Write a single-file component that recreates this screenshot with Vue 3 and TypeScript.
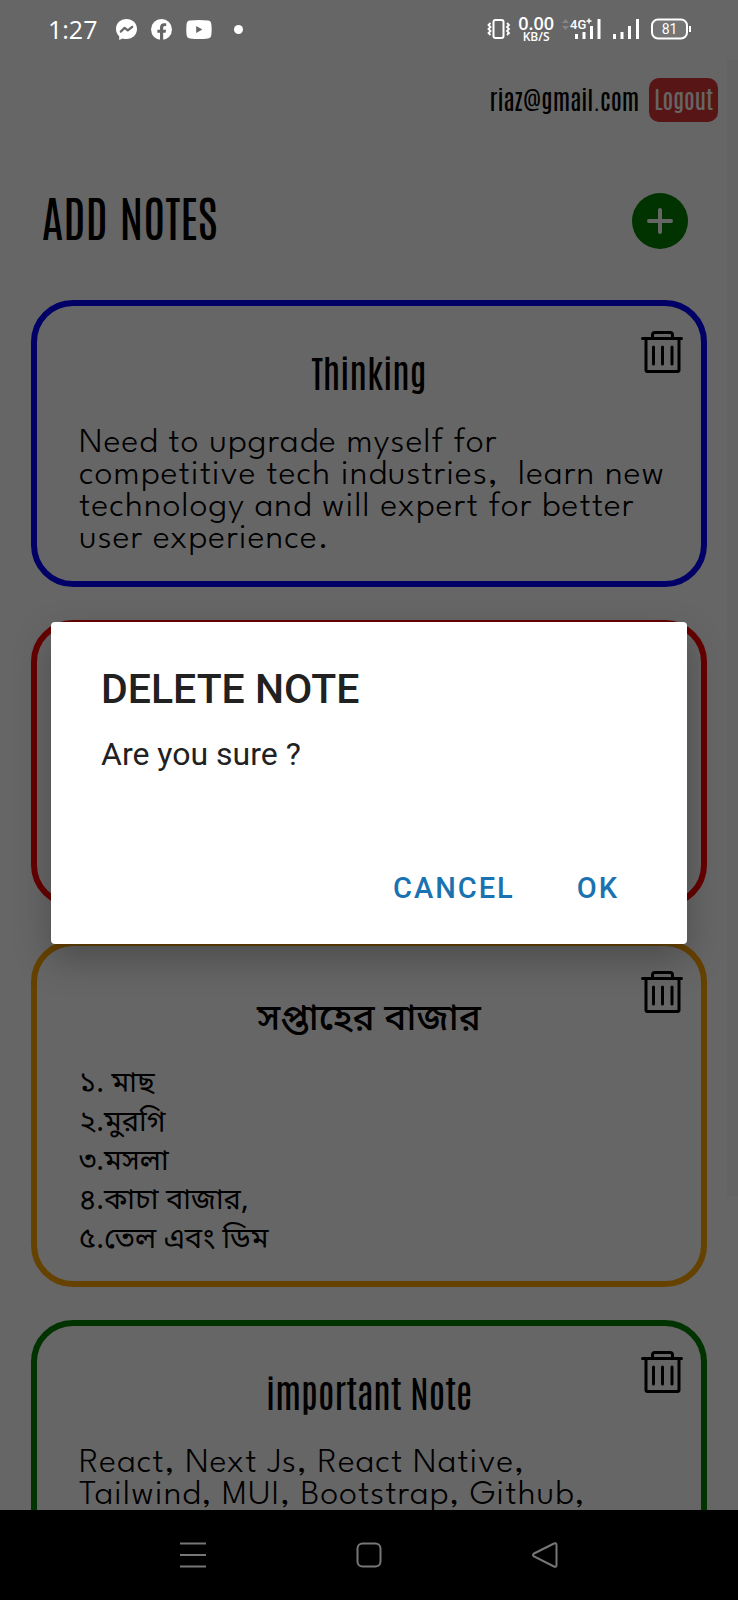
<script setup lang="ts">
import { ref } from 'vue'

interface Note {
  title: string
  body: string
  tone: 'blue' | 'red' | 'orange' | 'green'
  lang: 'en' | 'bn'
}

const notes: Note[] = [
  {
    title: 'Thinking',
    body: 'Need to upgrade myself for\ncompetitive tech industries,  learn new\ntechnology and will expert for better\nuser experience.',
    tone: 'blue',
    lang: 'en',
  },
  { title: '', body: '', tone: 'red', lang: 'en' },
  {
    title: 'সপ্তাহের বাজার',
    body: '১. মাছ\n২.মুরগি\n৩.মসলা\n৪.কাচা বাজার,\n৫.তেল এবং ডিম',
    tone: 'orange',
    lang: 'bn',
  },
  {
    title: 'important Note',
    body: 'React, Next Js, React Native,\nTailwind, MUI, Bootstrap, Github,',
    tone: 'green',
    lang: 'en',
  },
]

const confirming = ref(true)
</script>

<template>
  <div class="phone">
    <header class="status">
      <div class="status-left">
        <span class="clock">1:27</span>
        <svg viewBox="0 0 21 21" width="21" height="21">
          <path fill="#fff" d="M10.500 0C4.600 0 0 4.300 0 10c0 3 1.200 5.500 3.200 7.300V21l3.400-1.600c1.200.4 2.500.6 3.900.6C16.400 20 21 15.700 21 10S16.400 0 10.500 0z" />
          <path fill="none" stroke="#666" stroke-width="2.200" stroke-linejoin="round" stroke-linecap="round" d="M4.800 12.600 8.600 8.800l3.200 2.600 4.400-3.600" />
        </svg>
        <svg viewBox="0 0 21 21" width="21" height="21">
          <circle cx="10.500" cy="10.500" r="10.500" fill="#fff" />
          <path fill="#666" d="M9 21v-7.200H6.400v-3H9V8.500c0-2.700 1.600-4.200 4-4.200 1.100 0 2.200.2 2.200.2v2.600h-1.300c-1.300 0-1.700.8-1.700 1.600v2.100h2.900l-.5 3h-2.400V21z" />
        </svg>
        <svg viewBox="0 0 26 19" width="26" height="19">
          <path fill="#fff" d="M4 .6Q13-.4 22 .6 25 .9 25.300 4 26 9.500 25.300 15 25 18.100 22 18.400 13 19.400 4 18.400 1 18.100.6 15 0 9.500.6 4 1 .9 4 .6z" />
          <path fill="#666" d="M10.200 6v7l6.200-3.500z" />
        </svg>
        <span class="dot"></span>
      </div>
      <div class="status-right">
        <svg viewBox="0 0 24 20" width="24" height="20" fill="none" stroke="#fff">
          <rect x="6.500" y="1" width="10" height="18" rx="2" stroke-width="2" />
          <path stroke-width="1.800" d="M3.500 4 1.500 6l2 2-2 2 2 2-2 2 2 2M20 4l2 2-2 2 2 2-2 2 2 2-2 2" />
        </svg>
        <div class="speed"><span>0.00</span><small>KB/S</small></div>
        <svg viewBox="0 0 40 24" width="40" height="24">
          <path fill="#858585" d="M1 6l3.500-4L8 6zM1 9l3.500 4L8 9z" />
          <path fill="#fff" d="M14 17h3v5h-3zM21.500 15h3v7h-3zM29 9h3v13h-3zM36.500 2h3v20h-3z" />
          <text class="network" x="9" y="12">4G</text>
          <path stroke="#fff" stroke-width="1.500" d="M25.500 4h5M28 1.500v5" />
        </svg>
        <svg class="bars" viewBox="0 0 27 24" width="27" height="24">
          <path fill="#fff" d="M0 17h3v5H0zM7.500 15h3v7h-3zM15 9h3v13h-3zM23 2h3v20h-3z" />
        </svg>
        <svg class="battery" viewBox="0 0 41 22" width="41" height="22">
          <rect x="1" y="1.500" width="35" height="19" rx="6" fill="#757575" stroke="#fff" stroke-width="2" />
          <path fill="#fff" d="M38 8h2v6h-2z" />
          <text class="charge" x="18.500" y="16" text-anchor="middle">81</text>
        </svg>
      </div>
    </header>

    <main class="page">
      <div class="account">
        <span>riaz@gmail.com</span>
        <button class="logout" type="button">Logout</button>
      </div>
      <div class="heading">
        <h1>ADD NOTES</h1>
        <button class="add" type="button" aria-label="Add note">
          <svg viewBox="0 0 28 28" width="28" height="28" stroke="#fff" stroke-width="4" stroke-linecap="round">
            <path d="M14 3v22M3 14h22" />
          </svg>
        </button>
      </div>
      <article v-for="note in notes" :key="note.tone" class="note" :class="[note.tone, note.lang]" :lang="note.lang">
        <button class="trash" type="button" aria-label="Delete note" @click="confirming = true">
          <svg viewBox="0 0 42 42" width="42" height="42" fill="none" stroke="#000" stroke-width="3" stroke-linecap="round" stroke-linejoin="round">
            <path d="M1.500 7.500h39M5 7.500v31.500q0 1.500 1.500 1.500h30q1.500 0 1.500-1.500V7.500M11.500 7.500V4q0-2.500 2.500-2.500h15q2.500 0 2.500 2.500v3.500M12.500 16v17M21.500 16v17M31 16v17" />
          </svg>
        </button>
        <h2>{{ note.title }}</h2>
        <p>{{ note.body }}</p>
      </article>
    </main>

    <div v-if="confirming" class="backdrop">
      <section class="dialog" role="alertdialog" aria-labelledby="dialog-title" aria-describedby="dialog-text">
        <h2 id="dialog-title">DELETE NOTE</h2>
        <p id="dialog-text">Are you sure ?</p>
        <div class="actions">
          <button type="button" @click="confirming = false">CANCEL</button>
          <button type="button" @click="confirming = false">OK</button>
        </div>
      </section>
    </div>

    <nav class="system-nav">
      <button type="button" aria-label="Recent apps">
        <svg viewBox="0 0 26 26" width="26" height="26"><path d="M0 1.500h26M0 13h26M0 24.500h26" /></svg>
      </button>
      <button type="button" aria-label="Home">
        <svg viewBox="0 0 26 26" width="26" height="26"><rect x="1.500" y="1.500" width="23" height="23" rx="5" /></svg>
      </button>
      <button type="button" aria-label="Back">
        <svg viewBox="0 0 26 26" width="26" height="26"><path d="M2 11.500 22 1.500q2.500-1 2.500 1.500v20q0 2.500-2.500 1.500L2 14.500q-2-1.500 0-3z" /></svg>
      </button>
    </nav>
  </div>
</template>

<style>
body {
  margin: 0;
}
</style>

<style scoped>
.phone {
  position: relative;
  display: flex;
  flex-direction: column;
  height: 100vh;
  overflow: hidden;
  background: #fff;
  font-family: Antonio, "Roboto Condensed", Roboto, sans-serif;
}
button {
  padding: 0;
  border: 0;
  background: none;
  font: inherit;
  cursor: pointer;
}
h1,
h2,
p {
  margin: 0;
  font-weight: 400;
}
svg {
  display: block;
}
.status {
  position: absolute;
  z-index: 2;
  top: 0;
  left: 0;
  right: 0;
  display: flex;
  align-items: center;
  justify-content: space-between;
  height: 58px;
  padding: 0 46px 0 48px;
  box-sizing: border-box;
  color: #fff;
}
.status-left,
.status-right {
  display: flex;
  align-items: center;
}
.status-left {
  gap: 14px;
}
.clock {
  margin-right: 5px;
  font: 400 25px/32px "Open Sans", sans-serif;
}
.dot {
  width: 9px;
  height: 9px;
  margin-left: 8px;
  border-radius: 50%;
  background: #fff;
}
.speed {
  display: flex;
  flex-direction: column;
  align-items: center;
  margin: 0 7px;
  font: 600 18px/15px "Open Sans", sans-serif;
}
.speed small {
  font-size: 12px;
  line-height: 12px;
}
.network {
  fill: #fff;
  font: 500 13px Roboto, sans-serif;
}
.bars {
  margin-left: 12px;
}
.battery {
  margin-left: 11px;
}
.charge {
  fill: #fff;
  font: 400 14px Roboto, sans-serif;
}
.page {
  flex: 1;
  min-height: 0;
  padding-top: 78px;
  overflow: hidden;
}
.page::after {
  content: "";
  position: absolute;
  top: 60px;
  right: 0;
  width: 11px;
  height: 71%;
  background: rgba(0, 0, 0, 0.03);
}
.account {
  display: flex;
  align-items: center;
  justify-content: flex-end;
  gap: 10px;
  height: 44px;
  padding-right: 20px;
  font-size: 25px;
  line-height: 40px;
}
.account span {
  padding-bottom: 4px;
}
.logout {
  height: 44px;
  padding: 0 5px 4px;
  border-radius: 10px;
  background: #dc3535;
  color: #fff;
  font-size: 24px;
}
.heading {
  display: flex;
  align-items: center;
  justify-content: space-between;
  height: 58px;
  margin: 70px 50px 50px 42px;
}
.heading h1 {
  padding-bottom: 10px;
  font-size: 48px;
  font-weight: 500;
  line-height: 48px;
}
.add {
  display: grid;
  place-items: center;
  width: 56px;
  height: 56px;
  border-radius: 50%;
  background: green;
}
.note {
  position: relative;
  min-height: 287px;
  margin: 0 31px 33px;
  padding: 41px 30px 25px 42px;
  border: 6px solid;
  border-radius: 42px;
  box-sizing: border-box;
}
.note h2 {
  margin: 0 12px 33px 0;
  font-size: 37px;
  line-height: 48px;
  text-align: center;
}
.note p {
  font: 300 36px/32px "League Spartan", Lato, sans-serif;
  letter-spacing: 1px;
  white-space: pre;
}
.note.bn {
  padding-top: 46px;
}
.note.bn h2 {
  margin-bottom: 21px;
  font-family: "Noto Sans", "Noto Sans Bengali", sans-serif;
  font-weight: 500;
}
.note.bn p {
  font: 400 29px/39px "Noto Sans", "Noto Sans Bengali", sans-serif;
  letter-spacing: normal;
}
.blue {
  border-color: blue;
}
.red {
  border-color: red;
}
.orange {
  border-color: orange;
}
.green {
  border-color: green;
}
.trash {
  position: absolute;
  top: 25px;
  right: 18px;
}
.backdrop {
  position: absolute;
  z-index: 1;
  inset: 0 0 90px;
  display: flex;
  align-items: center;
  padding: 56px 51px 0;
  background: rgba(0, 0, 0, 0.6);
}
.dialog {
  flex: 1;
  padding: 43px 50px 32px;
  border-radius: 4px;
  background: #fff;
  box-shadow: 0 16px 36px rgba(0, 0, 0, 0.25);
  color: #212121;
  font-family: Roboto, sans-serif;
}
.dialog h2 {
  font-size: 41px;
  font-weight: 500;
  line-height: 48px;
}
.dialog p {
  margin: 21px 0 90px;
  font-size: 32px;
  line-height: 40px;
}
.actions {
  display: flex;
  justify-content: flex-end;
  gap: 62px;
  padding-right: 18px;
}
.actions button {
  height: 48px;
  color: #1a73b0;
  font-size: 29px;
  font-weight: 500;
  letter-spacing: 2px;
}
.system-nav {
  position: relative;
  z-index: 2;
  display: flex;
  align-items: center;
  justify-content: center;
  gap: 150px;
  height: 90px;
  background: #000;
}
.system-nav svg {
  fill: none;
  stroke: #777;
  stroke-width: 2;
}
</style>
